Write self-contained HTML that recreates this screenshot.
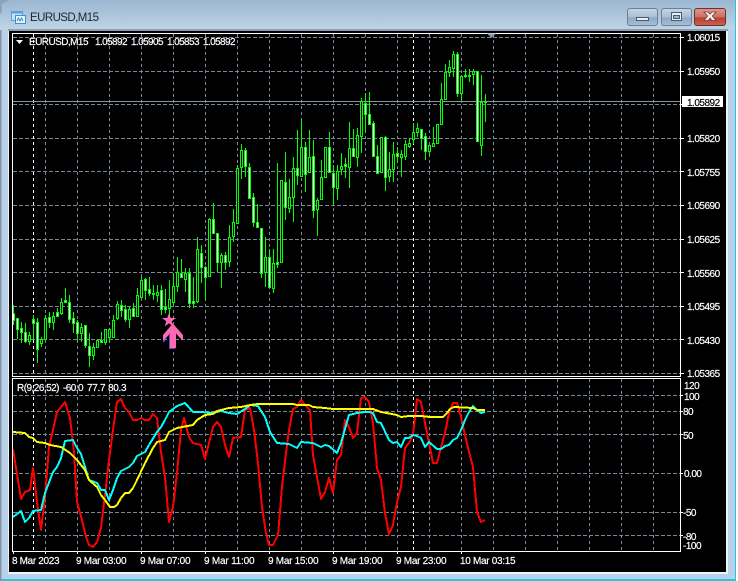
<!DOCTYPE html>
<html>
<head>
<meta charset="utf-8">
<title>EURUSD,M15</title>
<style>
html,body{margin:0;padding:0;background:#fff;width:738px;height:581px;overflow:hidden}
svg{display:block;position:absolute;left:0;top:0}
text{font-family:"Liberation Sans",sans-serif;font-size:10px;fill:#fff;stroke:#fff;stroke-width:.18px;letter-spacing:-.5px}
</style>
</head>
<body>
<svg width="738" height="581" viewBox="0 0 738 581" xmlns="http://www.w3.org/2000/svg">
<defs>
<linearGradient id="tb" x1="0" y1="0" x2="0" y2="1"><stop offset="0" stop-color="#9ab7d0"/><stop offset="1" stop-color="#c0d4e6"/></linearGradient>
<linearGradient id="btn" x1="0" y1="0" x2="0" y2="1"><stop offset="0" stop-color="#c6d6e6"/><stop offset=".5" stop-color="#a9bfd6"/><stop offset=".55" stop-color="#8fa9c5"/><stop offset="1" stop-color="#a6c0da"/></linearGradient>
<linearGradient id="cls" x1="0" y1="0" x2="0" y2="1"><stop offset="0" stop-color="#dd9a8e"/><stop offset=".5" stop-color="#cf6f60"/><stop offset=".55" stop-color="#b8402f"/><stop offset="1" stop-color="#c9634f"/></linearGradient>
</defs>

<!-- window frame -->
<rect x="0" y="0" width="738" height="581" fill="#fff"/>
<rect x="0" y="0" width="736" height="581" fill="#22c8e0"/>
<rect x="0" y="0" width="735" height="579" fill="#b8d0e8"/>
<rect x="0" y="0" width="1.500" height="581" fill="#8494a5"/>
<rect x="0" y="0" width="735" height="30" fill="url(#tb)"/>
<path d="M0 0H9L2 4V12L0 14Z" fill="#8ca5bd"/>
<rect x="8" y="29" width="720" height="2" fill="#8f9eae"/>
<rect x="8" y="31" width="720" height="543" fill="#eef4fa"/>
<rect x="9" y="31" width="717" height="541" fill="#000"/>

<!-- title icon -->
<rect x="11.500" y="11.500" width="11" height="9" fill="#c8e2f6" stroke="#5f9fd6"/>
<rect x="11.500" y="11.500" width="11" height="2" fill="#5f9fd6"/>
<rect x="15.500" y="15.500" width="10" height="8" fill="#e6f3fc" stroke="#3f8fd0"/>
<path d="M17 21l1.500-3 1.500 3 1.500-3 1.500 3" fill="none" stroke="#3f8fd0"/>
<text x="30" y="21" style="font-size:11.500px;letter-spacing:0;fill:#1b2735;stroke:none" textLength="69">EURUSD,M15</text>

<!-- window buttons -->
<rect x="627.500" y="8.500" width="30" height="17" rx="2.500" fill="url(#btn)" stroke="#6b7f96"/>
<rect x="636.500" y="17.500" width="12" height="3" fill="#e8eef5" stroke="#4c5c6e"/>
<rect x="661.500" y="8.500" width="30" height="17" rx="2.500" fill="url(#btn)" stroke="#6b7f96"/>
<rect x="671.500" y="12.500" width="10" height="8" fill="#e8eef5" stroke="#4c5c6e"/>
<rect x="673.500" y="15.500" width="6" height="3" fill="#9db4cb" stroke="#4c5c6e"/>
<rect x="694.500" y="8.500" width="31" height="17" rx="2.500" fill="url(#cls)" stroke="#6e3030"/>
<path d="M704 12h4l2 2.200 2-2.200h4l-3.700 4 3.700 4.500h-4l-2-2.400-2 2.400h-4l3.700-4.500z" fill="#f4f0ee" stroke="#7a3a34" stroke-width=".8"/>

<!-- grid -->
<g stroke="#778899" stroke-width="1" stroke-dasharray="4 2" fill="none" shape-rendering="crispEdges">
<path d="M13 37.500H680M13 71.500H680M13 104.500H680M13 138.500H680M13 171.500H680M13 205.500H680M13 239.500H680M13 272.500H680M13 306.500H680M13 339.500H680M13 373.500H680"/>
<path d="M13 395.500H680M13 411.500H680M13 434.500H680M13 473.500H680M13 512.500H680M13 535.500H680"/>
</g>
<g stroke="#778899" stroke-width="1" stroke-dasharray="3 3" fill="none" shape-rendering="crispEdges">
<path d="M45.500 34V376M77.500 34V376M109.500 34V376M141.500 34V376M173.500 34V376M205.500 34V376M237.500 34V376M269.500 34V376M301.500 34V376M333.500 34V376M365.500 34V376M397.500 34V376M429.500 34V376M461.500 34V376M493.500 34V376M525.500 34V376M557.500 34V376M589.500 34V376M621.500 34V376M653.500 34V376"/>
<path d="M45.500 379V551M77.500 379V551M109.500 379V551M141.500 379V551M173.500 379V551M205.500 379V551M237.500 379V551M269.500 379V551M301.500 379V551M333.500 379V551M365.500 379V551M397.500 379V551M429.500 379V551M461.500 379V551M493.500 379V551M525.500 379V551M557.500 379V551M589.500 379V551M621.500 379V551M653.500 379V551"/>
</g>
<g stroke="#fff" stroke-width="1" stroke-dasharray="3 3" fill="none" shape-rendering="crispEdges">
<path d="M33.500 34V376M413.500 34V376M33.500 379V551M413.500 379V551"/>
</g>

<!-- current price line -->
<rect x="13" y="101" width="667" height="1" fill="#8795a3"/>

<!-- candles: wicks -->
<path shape-rendering="crispEdges" fill="none" stroke="#00ff00" stroke-width="1" d="M13.500 305V325M17.500 318V339M21.500 322V343M25.500 323V343M29.500 332V345M33.500 315V340M37.500 318V363M41.500 337V347M45.500 315V340M49.500 312V328M53.500 312V330M57.500 308V316M61.500 298V315M65.500 288V303M69.500 295V323M73.500 312V333M77.500 320V342M81.500 323V342M85.500 325V348M89.500 333V367M93.500 343V360M97.500 339V348M101.500 332V342M105.500 329V345M109.500 328V343M113.500 315V337M117.500 301V320M121.500 300V317M125.500 305V322M129.500 307V328M133.500 303V317M137.500 288V317M141.500 277V297M145.500 278V300M149.500 277V296M153.500 285V300M157.500 285V302M161.500 285V315M165.500 289V313M169.500 280V316M173.500 273V305M177.500 257V292M181.500 259V278M185.500 268V292M189.500 268V308M193.500 277V308M197.500 237V303M201.500 245V283M205.500 266V300M209.500 218V277M213.500 203V234M217.500 233V272M221.500 253V288M225.500 252V270M229.500 225V267M233.500 209V242M237.500 165V223M241.500 144V179M245.500 148V177M249.500 163V198M253.500 193V227M257.500 204V228M261.500 228V278M265.500 237V287M269.500 249V287M273.500 249V293M277.500 163V268M281.500 180V262M285.500 152V220M289.500 179V213M293.500 157V222M297.500 130V185M301.500 120V177M305.500 142V192M309.500 130V173M313.500 140V218M317.500 198V236M321.500 160V200M325.500 147V177M329.500 132V173M333.500 165V205M337.500 165V200M341.500 153V175M345.500 158V178M349.500 122V188M353.500 129V157M357.500 128V167M361.500 98V153M365.500 93V132M369.500 92V125M373.500 121V156M377.500 145V174M381.500 137V172M385.500 136V191M389.500 152V182M393.500 142V182M397.500 147V163M401.500 150V177M405.500 140V160M409.500 138V148M413.500 123V144M417.500 123V137M421.500 129V150M425.500 133V160M429.500 145V156M433.500 127V147M437.500 124V143M441.500 83V124M445.500 64V99M449.500 60V77M453.500 51V77M457.500 52V97M461.500 75V102M465.500 69V78M469.500 69V82M473.500 69V85M477.500 71V141M481.500 75V156M485.500 94V122"/>
<!-- candles: white bodies -->
<path shape-rendering="crispEdges" fill="#fff" stroke="#00ff00" stroke-width="1" d="M12.500 313.500h2v7h-2zM16.500 318.500h2v11h-2zM20.500 328.500h2v4h-2zM24.500 332.500h2v9h-2zM32.500 319.500h2v4h-2zM36.500 322.500h2v27h-2zM48.500 317.500h2v5h-2zM56.500 312.500h2v4h-2zM64.500 300.500h2v2h-2zM68.500 302.500h2v17h-2zM72.500 318.500h2v5h-2zM76.500 322.500h2v11h-2zM84.500 325.500h2v20h-2zM88.500 346.500h2v9h-2zM100.500 340.500h2v2h-2zM120.500 305.500h2v5h-2zM124.500 309.500h2v10h-2zM132.500 308.500h2v8h-2zM144.500 279.500h2v11h-2zM148.500 289.500h2v4h-2zM152.500 293.500h2v1h-2zM160.500 290.500h2v19h-2zM164.500 307.500h2v2h-2zM180.500 273.500h2v4h-2zM188.500 273.500h2v30h-2zM192.500 301.500h2v2h-2zM200.500 253.500h2v14h-2zM204.500 267.500h2v10h-2zM212.500 219.500h2v14h-2zM216.500 233.500h2v29h-2zM224.500 255.500h2v7h-2zM244.500 150.500h2v16h-2zM248.500 167.500h2v31h-2zM252.500 197.500h2v25h-2zM256.500 222.500h2v5h-2zM260.500 228.500h2v45h-2zM268.500 257.500h2v30h-2zM276.500 262.500h2v2h-2zM284.500 182.500h2v25h-2zM296.500 168.500h2v7h-2zM304.500 147.500h2v27h-2zM312.500 156.500h2v54h-2zM328.500 147.500h2v25h-2zM332.500 173.500h2v14h-2zM344.500 164.500h2v2h-2zM352.500 148.500h2v8h-2zM364.500 103.500h2v11h-2zM368.500 114.500h2v10h-2zM372.500 123.500h2v33h-2zM376.500 156.500h2v17h-2zM384.500 137.500h2v40h-2zM396.500 153.500h2v3h-2zM420.500 129.500h2v9h-2zM424.500 136.500h2v15h-2zM456.500 54.500h2v39h-2zM464.500 75.500h2v1h-2zM468.500 75.500h2v1h-2zM476.500 71.500h2v70h-2z"/>
<!-- candles: black bodies -->
<path shape-rendering="crispEdges" fill="#000" stroke="#00ff00" stroke-width="1" d="M28.500 335.500h2v6h-2zM40.500 339.500h2v4h-2zM44.500 318.500h2v21h-2zM52.500 316.500h2v6h-2zM60.500 302.500h2v11h-2zM80.500 327.500h2v6h-2zM92.500 347.500h2v8h-2zM96.500 340.500h2v7h-2zM104.500 329.500h2v13h-2zM108.500 329.500h2v8h-2zM112.500 320.500h2v17h-2zM116.500 304.500h2v14h-2zM128.500 309.500h2v10h-2zM136.500 295.500h2v21h-2zM140.500 280.500h2v17h-2zM156.500 292.500h2v3h-2zM168.500 299.500h2v9h-2zM172.500 286.500h2v16h-2zM176.500 272.500h2v14h-2zM184.500 273.500h2v6h-2zM196.500 249.500h2v52h-2zM208.500 219.500h2v57h-2zM220.500 255.500h2v7h-2zM228.500 237.500h2v24h-2zM232.500 222.500h2v14h-2zM236.500 168.500h2v55h-2zM240.500 150.500h2v17h-2zM264.500 257.500h2v15h-2zM272.500 263.500h2v25h-2zM280.500 180.500h2v82h-2zM288.500 197.500h2v11h-2zM292.500 168.500h2v29h-2zM300.500 147.500h2v29h-2zM308.500 157.500h2v15h-2zM316.500 200.500h2v9h-2zM320.500 177.500h2v22h-2zM324.500 147.500h2v30h-2zM336.500 171.500h2v17h-2zM340.500 166.500h2v3h-2zM348.500 148.500h2v19h-2zM356.500 135.500h2v22h-2zM360.500 101.500h2v35h-2zM380.500 137.500h2v35h-2zM388.500 169.500h2v7h-2zM392.500 154.500h2v15h-2zM400.500 154.500h2v3h-2zM404.500 144.500h2v12h-2zM408.500 143.500h2v3h-2zM412.500 132.500h2v7h-2zM416.500 128.500h2v4h-2zM428.500 145.500h2v6h-2zM432.500 143.500h2v3h-2zM436.500 124.500h2v19h-2zM440.500 99.500h2v25h-2zM444.500 72.500h2v27h-2zM448.500 67.500h2v5h-2zM452.500 54.500h2v14h-2zM460.500 76.500h2v17h-2zM472.500 71.500h2v3h-2zM480.500 102.500h2v43h-2z"/>
<rect x="484" y="102" width="3" height="1" fill="#00ff00"/>

<!-- marker star + arrow -->
<path d="M169 333.500V349H175V347H171V333L164 340H163V342H164.500Z" fill="#5a4fc0"/>
<path d="M172.800 323.500L183 335V340H182L176 333.500V348H170V333.500L164 340H163V335Z" fill="#ff69b4"/>
<polygon points="169,313 170.700,318 176,318 171.700,321.200 173.300,326.500 169,323.300 164.700,326.500 166.300,321.200 162,318 167.300,318" fill="#ff69b4"/>

<!-- indicator lines -->
<g fill="none" stroke-width="2" shape-rendering="crispEdges" stroke-linejoin="round">
<polyline stroke="#ff0000" points="13,449 21,499 25,492 30,490 33,468 37,502 41,530 45,497 49,447 53,430 57,412 65,402 70,418 74,452 77,502 82,520 86,537 89,545 93,547 97,542 101,528 105,495 109,460 113,430 117,402 121,399 125,408 129,412 133,420 137,420 141,418 145,420 149,420 153,414 157,418 161,452 165,477 169,522 173,507 177,473 181,430 184,418 189,437 193,443 201,445 205,459 209,443 213,427 217,422 221,427 225,445 229,457 233,438 241,437 245,410 250,408 254,430 258,463 262,507 266,533 269,545 273,545 278,535 282,487 286,453 289,430 293,409 297,407 301,400 305,405 310,410 313,455 317,477 321,499 325,492 329,478 333,493 337,460 341,455 345,420 349,427 353,438 357,433 361,398 365,397 369,402 373,423 377,468 381,480 385,513 389,534 393,525 397,502 401,487 405,448 409,443 413,435 417,399 421,402 425,423 429,443 433,463 437,463 441,447 445,433 449,413 453,403 457,403 461,417 465,435 469,452 473,467 477,512 481,522 485,520"/>
<polyline stroke="#00ffff" points="13,517 21,511 25,522 29,518 33,511 41,510 45,493 53,472 57,467 61,458 65,441 73,440 77,448 81,454 89,480 97,483 101,490 105,490 109,500 113,490 117,478 121,471 129,467 133,463 137,456 145,452 149,445 157,432 161,427 165,420 169,412 177,406 185,403 193,412 201,412 213,413 221,411 229,413 237,414 245,409 250,405 258,406 265,417 270,432 277,443 289,444 297,448 301,442 313,443 321,447 325,445 329,446 337,453 341,443 349,415 357,413 365,412 369,412 373,413 377,422 381,423 389,440 393,443 397,442 401,447 405,438 409,438 413,435 417,436 421,438 425,447 429,442 437,449 441,449 445,446 449,445 453,440 457,438 461,430 465,420 469,412 473,406 477,410 481,413 485,412"/>
<polyline stroke="#ffff00" points="13,432 25,433 29,437 33,438 37,442 45,443 50,445 61,447 70,453 77,460 85,470 89,480 97,487 101,495 105,500 110,507 114,507 117,505 121,498 125,493 129,493 133,488 137,480 145,463 153,448 157,442 165,440 169,432 177,428 193,425 197,420 205,415 213,414 217,411 229,408 241,407 250,405 258,404 293,404 297,405 309,405 313,407 325,408 333,409 360,409 373,409 381,412 397,415 401,417 409,416 421,416 430,417 443,417 447,413 450,409 454,407 473,408 477,410 485,410"/>
</g>

<!-- chart borders -->
<g fill="none" stroke="#fff" stroke-width="1" shape-rendering="crispEdges">
<rect x="12.500" y="33.500" width="668" height="343"/>
<rect x="12.500" y="378.500" width="668" height="173"/>
<path d="M681 37.500h3M681 71.500h3M681 104.500h3M681 138.500h3M681 171.500h3M681 205.500h3M681 239.500h3M681 272.500h3M681 306.500h3M681 339.500h3M681 373.500h3"/>
<path d="M681 395.500h2M681 411.500h2M681 434.500h2M681 473.500h2M681 512.500h2M681 535.500h2"/>
<path d="M13.500 552v2M45.500 552v2M77.500 552v2M141.500 552v2M205.500 552v2M269.500 552v2M333.500 552v2M397.500 552v2M461.500 552v2"/>
</g>
<polygon points="487,33.500 496,33.500 491.500,38" fill="#8a97a5"/>

<!-- header text -->
<polygon points="16,40 23,40 19.500,44" fill="#fff"/>
<text x="29" y="45" textLength="59">EURUSD,M15</text>
<text x="95" y="45" textLength="32">1.05892</text>
<text x="131" y="45" textLength="32">1.05905</text>
<text x="167" y="45" textLength="32">1.05853</text>
<text x="203" y="45" textLength="32">1.05892</text>
<text x="17" y="391" textLength="42">R(9,26,52)</text>
<text x="63" y="391" textLength="20">-60.0</text>
<text x="87" y="391" textLength="18">77.7</text>
<text x="108" y="391" textLength="18">80.3</text>

<!-- price scale -->
<text x="687" y="41">1.06015</text>
<text x="687" y="75">1.05950</text>
<rect x="682" y="96" width="41" height="11" fill="#fff"/>
<text x="687" y="106" style="fill:#000;stroke:#000">1.05892</text>
<text x="687" y="142">1.05820</text>
<text x="687" y="176">1.05755</text>
<text x="687" y="209">1.05690</text>
<text x="687" y="243">1.05625</text>
<text x="687" y="277">1.05560</text>
<text x="687" y="310">1.05495</text>
<text x="687" y="344">1.05430</text>
<text x="687" y="377">1.05365</text>

<!-- indicator scale -->
<text x="684" y="389">120</text>
<text x="684" y="400">100</text>
<text x="683" y="415">80</text>
<text x="683" y="439">50</text>
<text x="684" y="477">0.00</text>
<text x="683" y="516">-50</text>
<text x="683" y="540">-80</text>
<text x="683" y="549">-100</text>

<!-- time scale -->
<text x="12" y="564" textLength="47">8 Mar 2023</text>
<text x="76" y="564" textLength="50">9 Mar 03:00</text>
<text x="140" y="564" textLength="50">9 Mar 07:00</text>
<text x="204" y="564" textLength="50">9 Mar 11:00</text>
<text x="268" y="564" textLength="50">9 Mar 15:00</text>
<text x="332" y="564" textLength="50">9 Mar 19:00</text>
<text x="396" y="564" textLength="50">9 Mar 23:00</text>
<text x="460" y="564" textLength="55">10 Mar 03:15</text>
</svg>
</body>
</html>
